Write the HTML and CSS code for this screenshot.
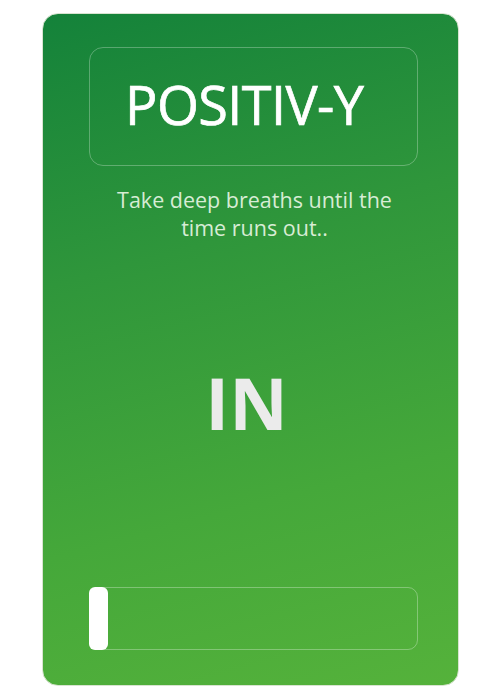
FILE: index.html
```html
<!DOCTYPE html>
<html>
<head>
<meta charset="utf-8">
<link rel="stylesheet" href="styles.css">
</head>
<body>
<div class="card">
  <div class="title-box"><h1 class="title">POSITIV-Y</h1></div>
  <p class="subtitle">Take deep breaths until the<br>time runs out..</p>
  <div class="phase">IN</div>
  <div class="progress"><div class="fill" style="width:19px"></div></div>
</div>
</body>
</html>
```
FILE: styles.css
```css
html, body { margin: 0; padding: 0; background: #fff; }
body { font-family: "Open Sans", "Noto Sans", sans-serif; }
.card {
  box-sizing: border-box;
  width: 417px;
  height: 673px;
  margin: 13px 0 0 42px;
  border-radius: 16px;
  border: 1px solid #d8e4d0;
  background: linear-gradient(165deg, #14823a 0%, #2f963b 35%, #45a83a 70%, #55b23b 100%);
  padding: 33px 40px 0 46px;
  display: flex;
  flex-direction: column;
}
.title-box {
  box-sizing: border-box;
  height: 119px;
  border: 1px solid rgba(255,255,255,0.28);
  border-radius: 14px;
  display: flex;
  align-items: center;
  padding-left: 35px;
  padding-bottom: 6px;
}
.title {
  margin: 0;
  font-weight: 400;
  font-size: 54px;
  line-height: 1;
  color: #fff;
  letter-spacing: -0.6px;
  -webkit-text-stroke: 0.7px #fff;
}
.subtitle {
  margin: 20px 0 0;
  text-align: center;
  font-size: 21.5px;
  line-height: 28px;
  color: rgba(240,250,235,0.88);
  padding-left: 2px;
}
.phase {
  margin-top: 124px;
  text-align: center;
  font-weight: 700;
  font-size: 72px;
  line-height: 1;
  color: #ebebeb;
  padding-right: 14px;
}
.progress {
  box-sizing: border-box;
  margin-top: auto;
  margin-bottom: 35px;
  height: 63px;
  border: 1px solid rgba(255,255,255,0.3);
  border-radius: 10px;
  display: flex;
}
.fill {
  background: #fff;
  border-radius: 6px;
  margin: -1px 0 0 -1px;
  height: 63px;
}
```
